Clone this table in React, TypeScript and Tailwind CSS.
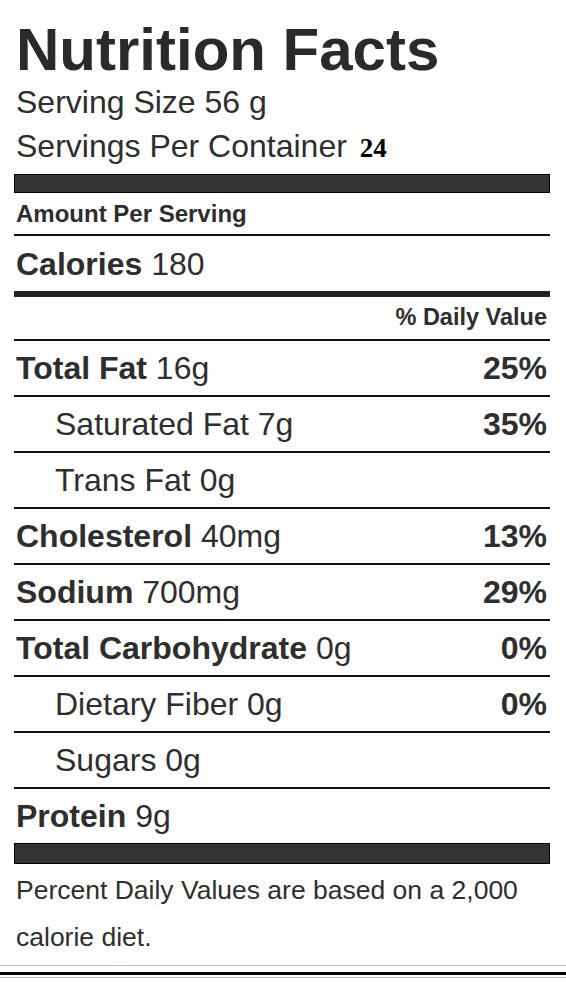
const ROWS = [
  { label: 'Total Fat', value: '16g', pct: '25%', bold: true },
  { label: 'Saturated Fat', value: '7g', pct: '35%', bold: false },
  { label: 'Trans Fat', value: '0g', pct: '', bold: false },
  { label: 'Cholesterol', value: '40mg', pct: '13%', bold: true },
  { label: 'Sodium', value: '700mg', pct: '29%', bold: true },
  { label: 'Total Carbohydrate', value: '0g', pct: '0%', bold: true },
  { label: 'Dietary Fiber', value: '0g', pct: '0%', bold: false },
  { label: 'Sugars', value: '0g', pct: '', bold: false },
]

export default function App() {
  return (
    <div className="min-h-[982px] w-[566px] bg-white font-['Liberation_Sans',Arial,sans-serif] text-[#2e2e2e]">
      <div className="ml-[14px] w-[536px]">
        <h1 className="pl-[2px] pt-[19px] text-[60px] font-bold leading-[61px] text-[#2a2a2a]">Nutrition Facts</h1>
        <div className="h-[44px] pl-[2px] text-[32px] leading-[44px]">Serving Size 56 g</div>
        <div className="h-[44px] pl-[2px] text-[32px] leading-[44px]">
          Servings Per Container{' '}
          <span className="ml-[4px] font-['Liberation_Serif',serif] text-[27px] font-bold leading-none text-black">
            24
          </span>
        </div>
        <div className="mt-[6px] h-[19px] border border-black bg-[#333]" />
        <div className="flex h-[43px] items-center border-b-2 border-[#111] pl-[2px] text-[24px] font-bold">
          Amount Per Serving
        </div>
        <div className="flex h-[61px] items-center border-b-[6px] border-[#222] pl-[2px] text-[32px]">
          <span className="font-bold">Calories</span>&nbsp;180
        </div>
        <div className="flex h-[44px] items-center justify-end border-b-2 border-[#111] pr-[3px] text-[23.5px] font-bold">
          % Daily Value
        </div>
        {ROWS.map((r) => (
          <div
            key={r.label}
            className="flex h-[56px] items-center justify-between border-b-2 border-[#111] pr-[3px] text-[32px]"
          >
            <div className={r.bold ? 'pl-[2px]' : 'pl-[41px]'}>
              {r.bold ? <span className="font-bold">{r.label}</span> : r.label}&nbsp;{r.value}
            </div>
            {r.pct && <div className="font-bold">{r.pct}</div>}
          </div>
        ))}
        <div className="flex h-[54px] items-center pl-[2px] text-[32px]">
          <span className="font-bold">Protein</span>&nbsp;9g
        </div>
        <div className="h-[21px] border border-black bg-[#333]" />
        <p className="pl-[2px] pt-[3px] text-[26.5px] leading-[47px]">
          Percent Daily Values are based on a 2,000 calorie diet.
        </p>
      </div>
      <div className="mt-[4px] border-t border-[#bbb] pt-[6px]">
        <div className="border-t-[3px] border-black" />
        <div className="mt-[2px] border-t border-[#bbb]" />
      </div>
    </div>
  )
}
